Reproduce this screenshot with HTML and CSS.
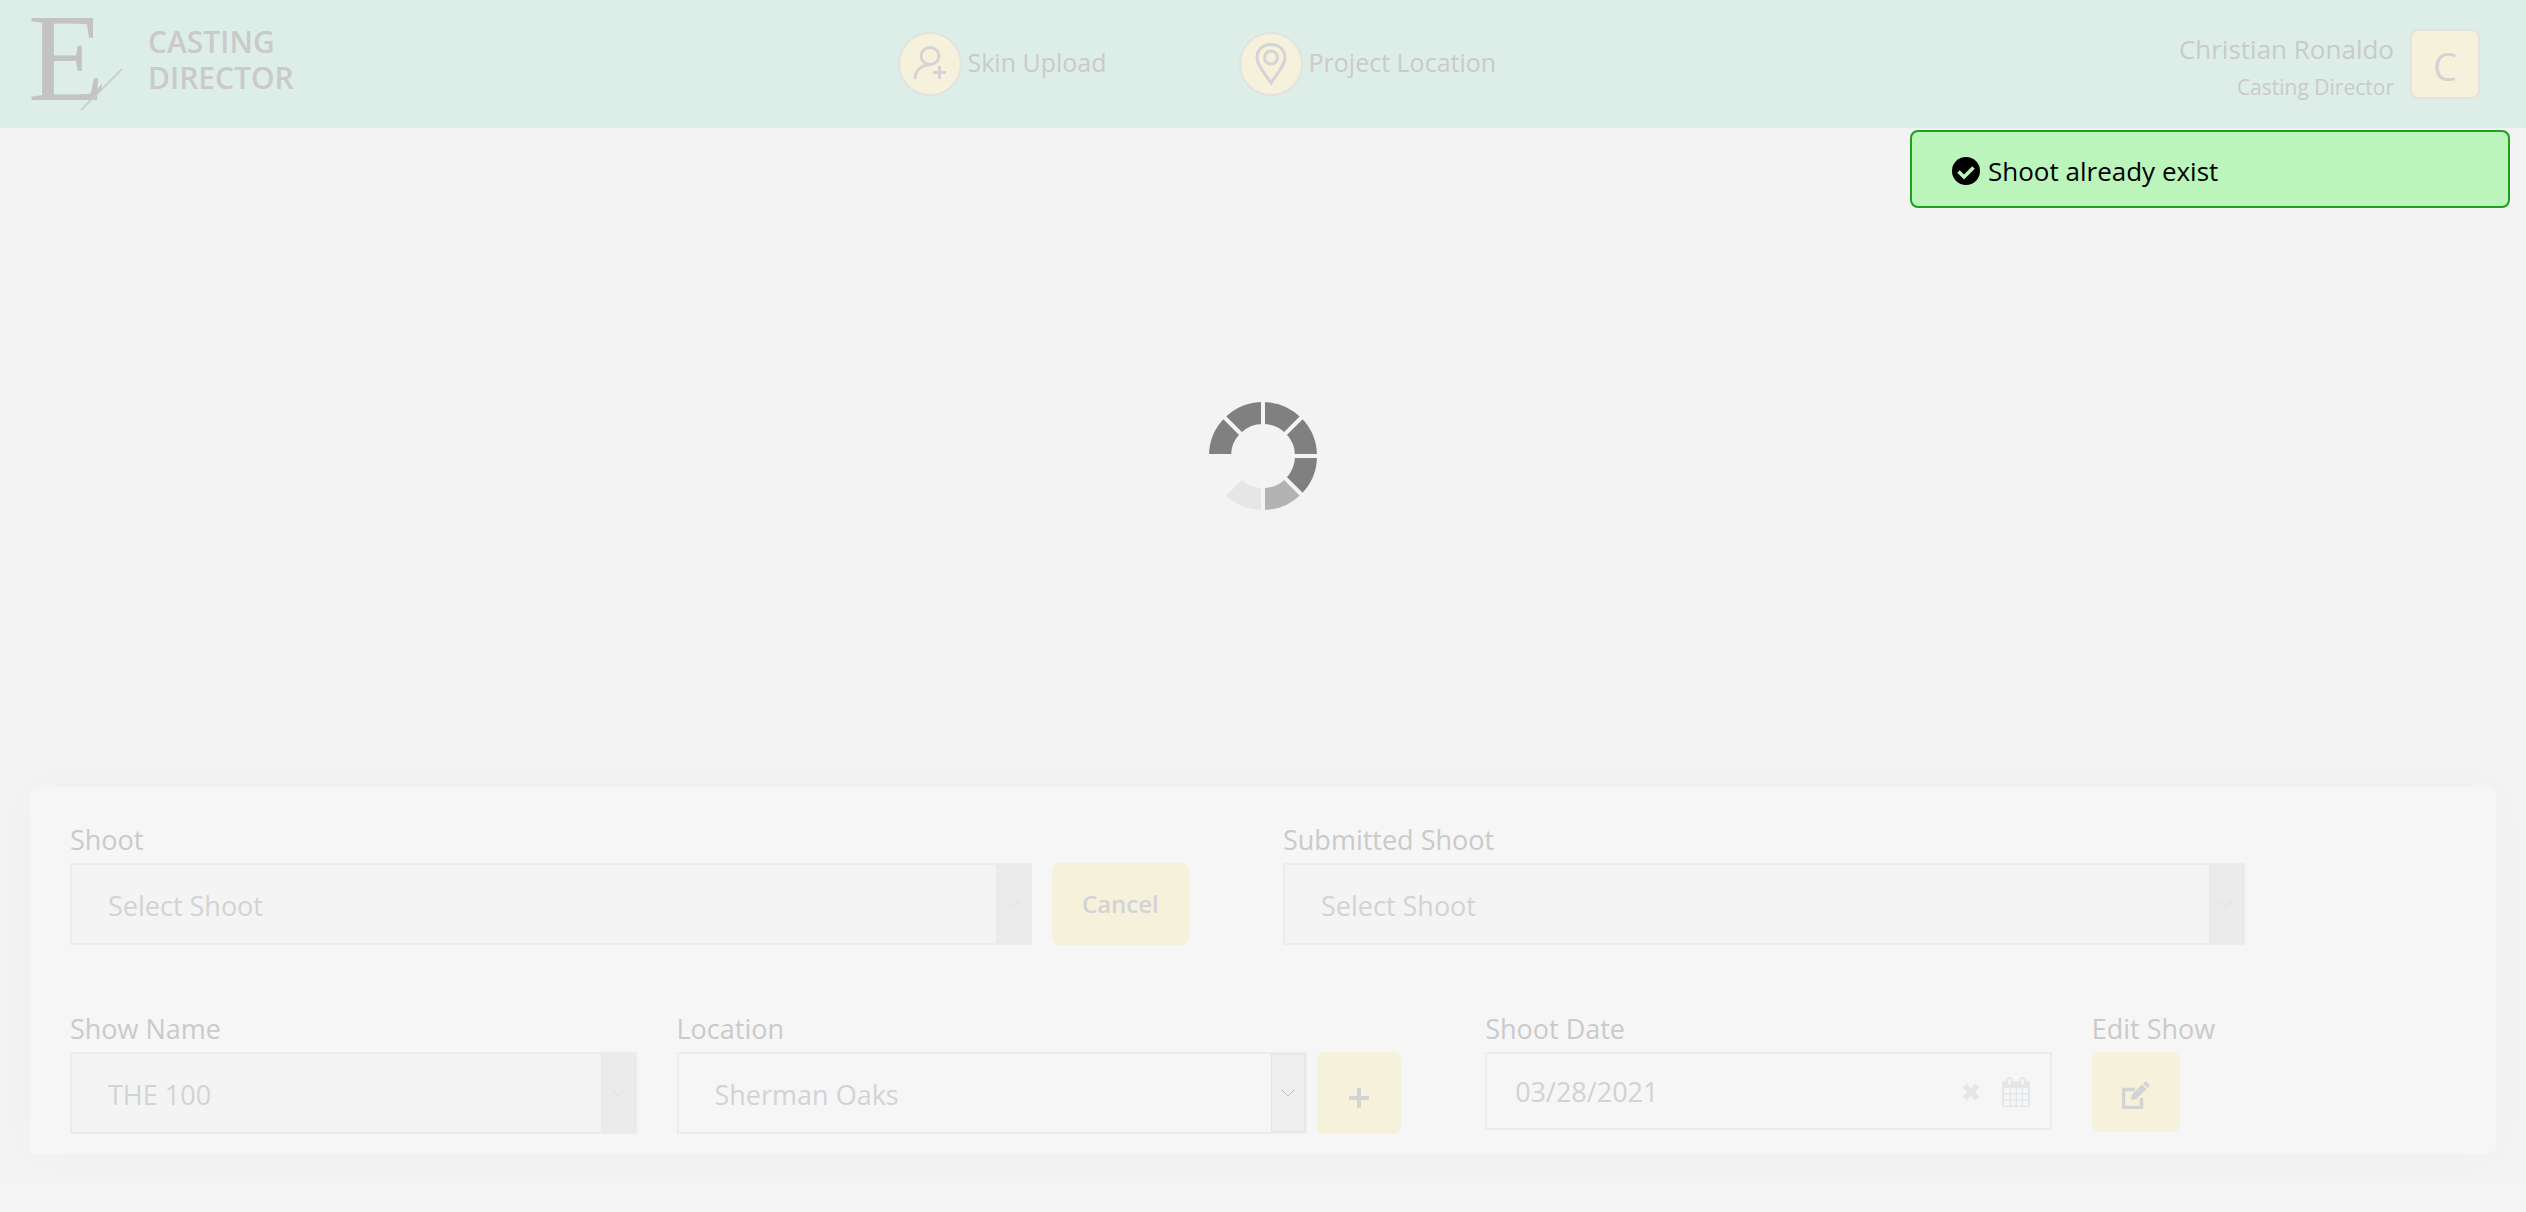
FILE: index.html
```html
<!DOCTYPE html>
<html lang="en">
<head>
<meta charset="utf-8">
<meta name="viewport" content="width=device-width, initial-scale=1">
<title>Casting Director</title>
<link rel="stylesheet" href="styles.css">
</head>
<body>
<header class="topbar">
  <a class="brand" href="#">
    <svg class="brand-mark" viewBox="0 0 94 96" aria-hidden="true">
      <text class="brand-letter" x="-2" y="84">E</text>
      <path d="M51 94 92 53" fill="none" stroke="#cbd0ce" stroke-width="2"/>
      <path d="M58 87 72 67 71 74Z" fill="#c3c3c3"/>
    </svg>
    <span class="brand-name">CASTING<br>DIRECTOR</span>
  </a>
  <nav class="nav">
    <a class="nav-link" href="#">
      <span class="nav-icon">
        <svg viewBox="0 0 60 60" fill="none" stroke="#d4d4d6" stroke-width="3">
          <ellipse cx="30" cy="22" rx="9" ry="8.500"/>
          <path d="M15 45C15 37 21 31 29 31"/>
          <path d="M33 38.500H46M39.500 32V45"/>
        </svg>
      </span>
      <span class="nav-label">Skin Upload</span>
    </a>
    <a class="nav-link" href="#">
      <span class="nav-icon">
        <svg viewBox="0 0 60 60" fill="none" stroke="#d4d4d6" stroke-width="3">
          <path d="M30 49C24 39 16 32 16 23.500C16 16 22 10.500 30 10.500S44 16 44 23.500C44 32 36 39 30 49Z"/>
          <circle cx="30" cy="23.500" r="6.500"/>
        </svg>
      </span>
      <span class="nav-label">Project Location</span>
    </a>
  </nav>
  <div class="user">
    <div class="user-text">
      <span class="user-name">Christian Ronaldo</span>
      <span class="user-role">Casting Director</span>
    </div>
    <button class="avatar" type="button">C</button>
  </div>
</header>

<div class="toast" role="status">
  <svg class="toast-icon" viewBox="0 0 28 28" aria-hidden="true">
    <circle cx="14" cy="14" r="14"/>
    <path d="M6.500 14.500 12 20 21.500 10.500" fill="none" stroke="#bbf5bb" stroke-width="3.600"/>
  </svg>
  Shoot already exist
</div>

<main class="page">
  <section class="stage">
    <svg class="spinner" viewBox="-54 -54 108 108" role="img" aria-label="Loading">
      <g class="spinner-ring">
        <circle r="43" pathLength="8" stroke="#808080" stroke-dasharray="3 5" transform="rotate(-90)"/>
        <circle r="43" pathLength="8" stroke="#b3b3b3" stroke-dasharray="1 7" transform="rotate(45)"/>
        <circle r="43" pathLength="8" stroke="#e6e6e6" stroke-dasharray="1 7" transform="rotate(90)"/>
        <circle r="43" pathLength="8" stroke="#f4f4f4" stroke-dasharray="1 7" transform="rotate(135)"/>
        <circle r="43" pathLength="8" stroke="#808080" stroke-dasharray="2 6" transform="rotate(180)"/>
      </g>
      <path d="M-54 0H54M0-54V54M-39-39 39 39M39-39-39 39" stroke="#f4f4f4" stroke-width="4"/>
    </svg>
  </section>

  <form class="card">
    <div class="field half">
      <label for="shoot">Shoot</label>
      <div class="row wide-gap">
        <div class="select disabled">
          <select id="shoot" disabled><option>Select Shoot</option></select>
          <span class="arrow"><svg viewBox="0 0 14 8"><path d="M0.500 0.500 7 7 13.500 0.500"/></svg></span>
        </div>
        <button class="btn cancel" type="button">Cancel</button>
      </div>
    </div>
    <div class="field half">
      <label for="submitted">Submitted Shoot</label>
      <div class="row">
        <div class="select disabled">
          <select id="submitted" disabled><option>Select Shoot</option></select>
          <span class="arrow"><svg viewBox="0 0 14 8"><path d="M0.500 0.500 7 7 13.500 0.500"/></svg></span>
        </div>
      </div>
    </div>
    <div class="field quarter">
      <label for="show">Show Name</label>
      <div class="row">
        <div class="select disabled full">
          <select id="show" disabled><option>THE 100</option></select>
          <span class="arrow"><svg viewBox="0 0 14 8"><path d="M0.500 0.500 7 7 13.500 0.500"/></svg></span>
        </div>
      </div>
    </div>
    <div class="field third">
      <label for="location">Location</label>
      <div class="row">
        <div class="select">
          <select id="location"><option>Sherman Oaks</option></select>
          <span class="arrow"><svg viewBox="0 0 14 8"><path d="M0.500 0.500 7 7 13.500 0.500"/></svg></span>
        </div>
        <button class="btn add" type="button" aria-label="Add location">
          <svg viewBox="0 0 20 20"><path d="M0 10H20M10 0V20" stroke="#d3d3d4" stroke-width="4"/></svg>
        </button>
      </div>
    </div>
    <div class="field quarter">
      <label for="date">Shoot Date</label>
      <div class="date">
        <input id="date" type="text" value="03/28/2021">
        <button class="icon-btn" type="button" aria-label="Clear date">
          <svg class="clear-icon" viewBox="0 0 18 18"><path d="M2.500 2.500 15.500 15.500M15.500 2.500 2.500 15.500" stroke="#e4e7ea" stroke-width="5.500"/></svg>
        </button>
        <button class="icon-btn" type="button" aria-label="Open calendar">
          <svg class="calendar-icon" viewBox="0 0 28 30">
            <path fill="#e4e7ea" fill-rule="evenodd" d="M2 4H26Q28 4 28 6V28Q28 30 26 30H2Q0 30 0 28V6Q0 4 2 4ZM2 11V16H7.500V11ZM9 11V16H13.500V11ZM15 11V16H19.500V11ZM21 11V16H26V11ZM2 17.500V22H7.500V17.500ZM9 17.500V22H13.500V17.500ZM15 17.500V22H19.500V17.500ZM21 17.500V22H26V17.500ZM2 23.500V28.500H7.500V23.500ZM9 23.500V28.500H13.500V23.500ZM15 23.500V28.500H19.500V23.500ZM21 23.500V28.500H26V23.500Z"/>
            <rect x="5" y="1" width="5" height="7.500" rx="2.500" fill="#f5f5f5" stroke="#e4e7ea" stroke-width="2"/>
            <rect x="18" y="1" width="5" height="7.500" rx="2.500" fill="#f5f5f5" stroke="#e4e7ea" stroke-width="2"/>
          </svg>
        </button>
      </div>
    </div>
    <div class="field sixth">
      <label for="edit">Edit Show</label>
      <button class="btn edit" id="edit" type="button">
        <svg viewBox="0 0 28 28">
          <path d="M13 8.500H1.500V26.500H19.500V17" fill="none" stroke="#d3d3d4" stroke-width="3.400"/>
          <path d="M9 19 10 13.500 20 3.500 24.500 8 14.500 18Z" fill="#d3d3d4"/>
          <path d="M21 2.500 23.500 0 28 4.500 25.500 7Z" fill="#d3d3d4"/>
        </svg>
      </button>
    </div>
  </form>
</main>
</body>
</html>
```
FILE: styles.css
```css
* {
  box-sizing: border-box;
}

body {
  margin: 0;
  background: #f5f5f5;
  color: #cacaca;
  font-family: "Segoe UI", "Open Sans", "Noto Sans", sans-serif;
  font-size: 27px;
  line-height: 30px;
}

a {
  color: inherit;
  text-decoration: none;
}

button,
input,
select {
  margin: 0;
  padding: 0;
  border: 0;
  background: none;
  color: inherit;
  font: inherit;
}

svg {
  display: block;
}

/* Header */

.topbar {
  display: grid;
  grid-template-columns: 35fr 40fr 25fr;
  align-items: center;
  height: 128px;
  padding: 0 46px 0 30px;
  background: #ddeee8;
}

.brand {
  display: flex;
  align-items: center;
  gap: 24px;
}

.brand-mark {
  width: 94px;
  height: 96px;
  overflow: visible;
}

.brand-letter {
  font-family: "Liberation Serif", serif;
  font-size: 125px;
  fill: #c3c3c3;
}

.brand-name {
  font-size: 30px;
  font-weight: 600;
  line-height: 36px;
  padding-bottom: 8px;
}

.nav {
  display: flex;
  gap: 132px;
  padding-left: 10px;
}

.nav-link {
  display: flex;
  align-items: center;
  gap: 6px;
  font-size: 25px;
  white-space: nowrap;
}

.nav-label {
  padding-bottom: 4px;
}

.nav-icon {
  width: 64px;
  height: 64px;
  border: 2px solid #e2e2e2;
  border-radius: 50%;
  background: #f6f1db;
}

.user {
  display: flex;
  justify-content: flex-end;
  align-items: center;
  gap: 16px;
}

.user-text {
  display: flex;
  flex-direction: column;
  align-items: flex-end;
  gap: 8px;
  padding-top: 8px;
  white-space: nowrap;
}

.user-name {
  font-size: 26px;
}

.user-role {
  font-size: 21px;
}

.avatar {
  width: 70px;
  height: 70px;
  padding-top: 4px;
  border: 2px solid #e2e2e2;
  border-radius: 8px;
  background: #f6f1db;
  color: #d3d3d4;
  font-size: 38px;
}

/* Notification */

.toast {
  position: fixed;
  top: 130px;
  right: 16px;
  display: flex;
  align-items: center;
  gap: 8px;
  width: 600px;
  height: 78px;
  padding: 4px 40px 0;
  border: 2px solid #1ba11b;
  border-radius: 8px;
  background: #bbf5bb;
  color: #000;
  font-size: 26px;
}

.toast-icon {
  width: 28px;
  height: 28px;
}

/* Page */

.page {
  padding: 0 30px 30px;
  background: #f3f3f3;
  overflow: hidden;
}

.stage {
  display: flex;
  align-items: center;
  justify-content: center;
  min-height: 659px;
  padding-bottom: 4px;
}

.spinner {
  width: 108px;
  height: 108px;
}

.spinner-ring {
  fill: none;
  stroke-width: 22px;
}

.card {
  display: grid;
  grid-template-columns: repeat(12, 1fr);
  row-gap: 69px;
  padding: 38px 20px 20px;
  border-radius: 8px;
  background: #f6f6f6;
  box-shadow: 0 0 50px rgba(0, 0, 0, 0.02);
}

.field {
  display: flex;
  flex-direction: column;
  align-items: flex-start;
  gap: 8px;
  min-width: 0;
  padding: 0 20px;
}

.half {
  grid-column: span 6;
}

.third {
  grid-column: span 4;
}

.quarter {
  grid-column: span 3;
}

.sixth {
  grid-column: span 2;
}

.row {
  display: flex;
  gap: 10px;
  width: 100%;
}

.wide-gap {
  gap: 20px;
}

.select {
  display: grid;
  flex: none;
  width: 82%;
  height: 82px;
  border: 2px solid #ececec;
  color: #d2d3d5;
}

.full {
  width: 100%;
}

.select select,
.arrow {
  grid-area: 1 / 1;
}

.select select {
  appearance: none;
  width: 100%;
  padding: 4px 36px 0;
  border-radius: 0;
  opacity: 1;
}

.arrow {
  display: flex;
  align-items: center;
  justify-content: center;
  justify-self: end;
  width: 34px;
  border: 1px solid #e5e5e5;
  background: #efefef;
  pointer-events: none;
}

.arrow svg {
  width: 14px;
  height: 8px;
  fill: none;
  stroke: #bdbdbd;
}

.disabled {
  background: #f4f4f4;
}

.disabled .arrow {
  border-color: #e9e9e9;
  background: #ebebeb;
}

.disabled .arrow svg {
  stroke: #dfdfdf;
}

.btn {
  display: flex;
  align-items: center;
  justify-content: center;
  border-radius: 8px;
  background: #f6f1db;
  color: #d3d3d4;
}

.cancel {
  width: 137px;
  height: 82px;
  font-size: 24px;
  font-weight: 600;
}

.add {
  width: 84px;
  height: 82px;
  padding-top: 10px;
}

.add svg {
  width: 20px;
  height: 20px;
}

.edit {
  width: 88px;
  height: 80px;
  padding-top: 6px;
}

.edit svg {
  width: 28px;
  height: 28px;
}

.date {
  display: flex;
  align-items: center;
  width: 100%;
  height: 78px;
  padding: 2px 20px 0 28px;
  border: 2px solid #ececec;
  color: #d0d2d6;
}

.date input {
  flex: 1;
  min-width: 0;
}

.icon-btn + .icon-btn {
  margin-left: 22px;
}

.clear-icon {
  width: 18px;
  height: 18px;
}

.calendar-icon {
  width: 28px;
  height: 30px;
}
```
